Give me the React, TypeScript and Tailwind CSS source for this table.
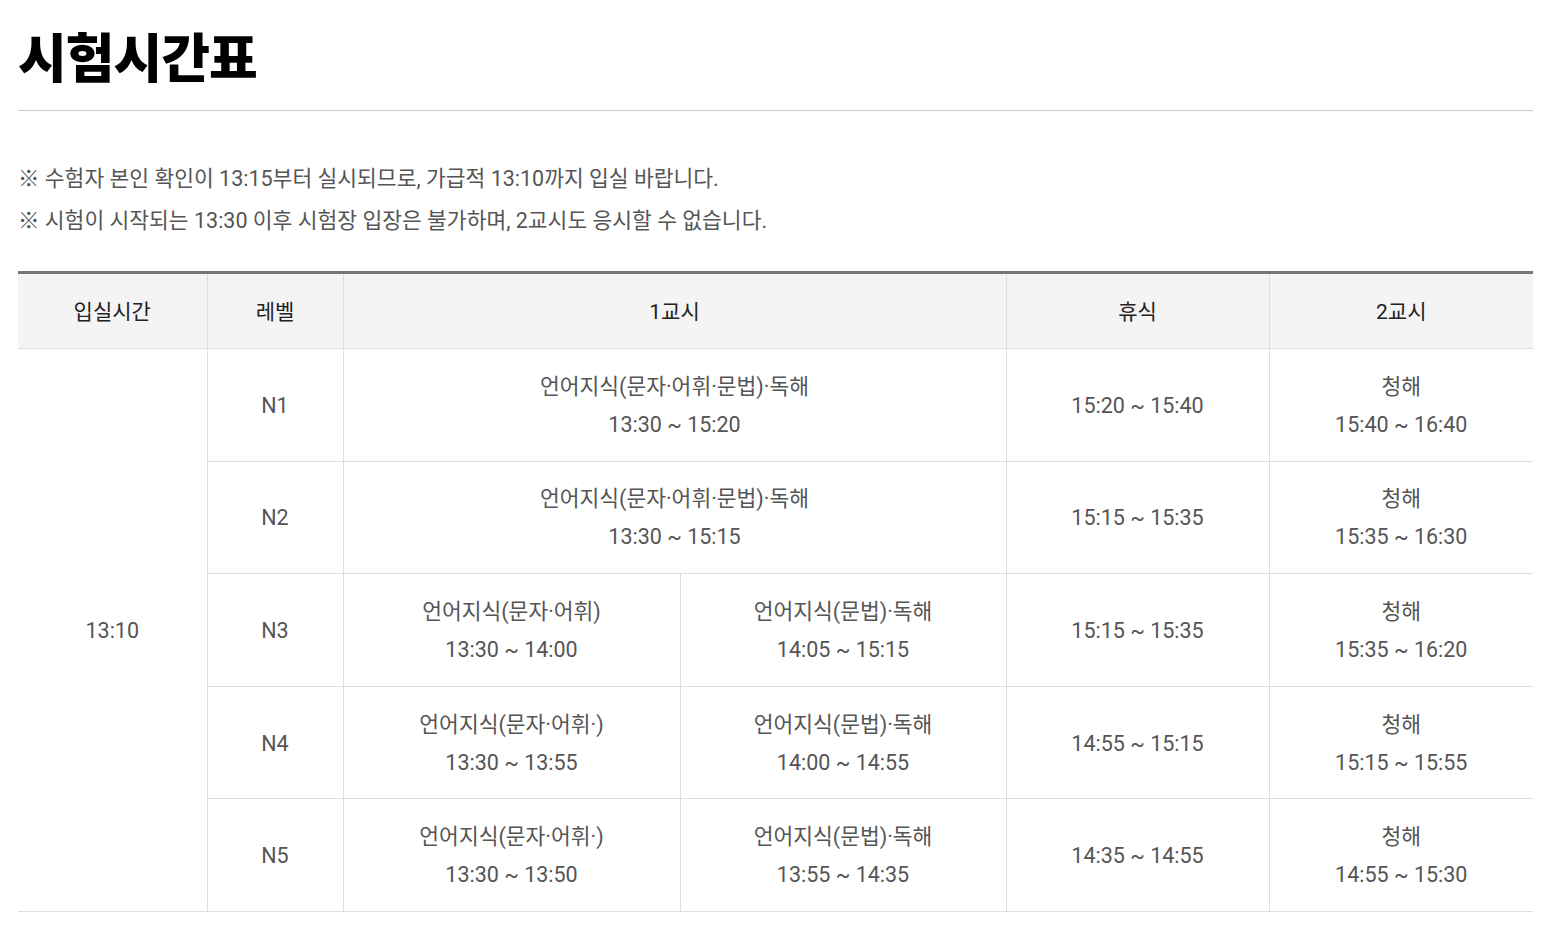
const FONT = { fontFamily: 'Roboto, "Noto Sans CJK KR", sans-serif' };

type Row = {
  level: string;
  first: [string, string][];
  rest: string;
  second: string;
};

const ROWS: Row[] = [
  { level: 'N1', first: [['언어지식(문자·어휘·문법)·독해', '13:30 ~ 15:20']], rest: '15:20 ~ 15:40', second: '15:40 ~ 16:40' },
  { level: 'N2', first: [['언어지식(문자·어휘·문법)·독해', '13:30 ~ 15:15']], rest: '15:15 ~ 15:35', second: '15:35 ~ 16:30' },
  {
    level: 'N3',
    first: [
      ['언어지식(문자·어휘)', '13:30 ~ 14:00'],
      ['언어지식(문법)·독해', '14:05 ~ 15:15'],
    ],
    rest: '15:15 ~ 15:35',
    second: '15:35 ~ 16:20',
  },
  {
    level: 'N4',
    first: [
      ['언어지식(문자·어휘·)', '13:30 ~ 13:55'],
      ['언어지식(문법)·독해', '14:00 ~ 14:55'],
    ],
    rest: '14:55 ~ 15:15',
    second: '15:15 ~ 15:55',
  },
  {
    level: 'N5',
    first: [
      ['언어지식(문자·어휘·)', '13:30 ~ 13:50'],
      ['언어지식(문법)·독해', '13:55 ~ 14:35'],
    ],
    rest: '14:35 ~ 14:55',
    second: '14:55 ~ 15:30',
  },
];

const td = 'border border-[#dddddd] text-center align-middle h-[112.6px] pt-[2px] text-[21.5px] leading-[38px] text-[#555555]';
const th = 'border border-[#dddddd] border-t-0 h-[76px] pt-[3px] font-normal text-[21px] text-[#222222]';

export default function App() {
  return (
    <div className="bg-white min-h-[930px] pl-[18px] pr-[24px] pt-[22px]" style={FONT}>
      <h1
        className="text-[53px] leading-[66px] font-black text-black tracking-[-1px] pb-[22px] border-b border-[#cccccc]"
        style={{ fontFamily: '"Noto Sans CJK KR", sans-serif' }}
      >
        시험시간표
      </h1>

      <div className="pt-[47px] text-[21.5px] leading-[42px] text-[#555555]">
        <p>※ 수험자 본인 확인이 13:15부터 실시되므로, 가급적 13:10까지 입실 바랍니다.</p>
        <p>※ 시험이 시작되는 13:30 이후 시험장 입장은 불가하며, 2교시도 응시할 수 없습니다.</p>
      </div>

      <table className="mt-[29px] w-full border-collapse border-t-[3px] border-t-[#777777] table-fixed">
        <colgroup>
          <col className="w-[189px]" />
          <col className="w-[136px]" />
          <col className="w-[337px]" />
          <col className="w-[326px]" />
          <col className="w-[263px]" />
          <col className="w-[264px]" />
        </colgroup>
        <thead>
          <tr className="bg-[#f4f4f4]">
            <th className={`${th} border-l-0`}>입실시간</th>
            <th className={th}>레벨</th>
            <th colSpan={2} className={th}>
              1교시
            </th>
            <th className={th}>휴식</th>
            <th className={`${th} border-r-0`}>2교시</th>
          </tr>
        </thead>
        <tbody>
          {ROWS.map((row, i) => (
            <tr key={row.level}>
              {i === 0 && (
                <td rowSpan={ROWS.length} className={`${td} border-l-0`}>
                  13:10
                </td>
              )}
              <td className={td}>{row.level}</td>
              {row.first.map(([subject, time]) => (
                <td key={subject + time} colSpan={row.first.length === 1 ? 2 : 1} className={td}>
                  <div>{subject}</div>
                  <div>{time}</div>
                </td>
              ))}
              <td className={td}>{row.rest}</td>
              <td className={`${td} border-r-0`}>
                <div>청해</div>
                <div>{row.second}</div>
              </td>
            </tr>
          ))}
        </tbody>
      </table>
    </div>
  );
}
